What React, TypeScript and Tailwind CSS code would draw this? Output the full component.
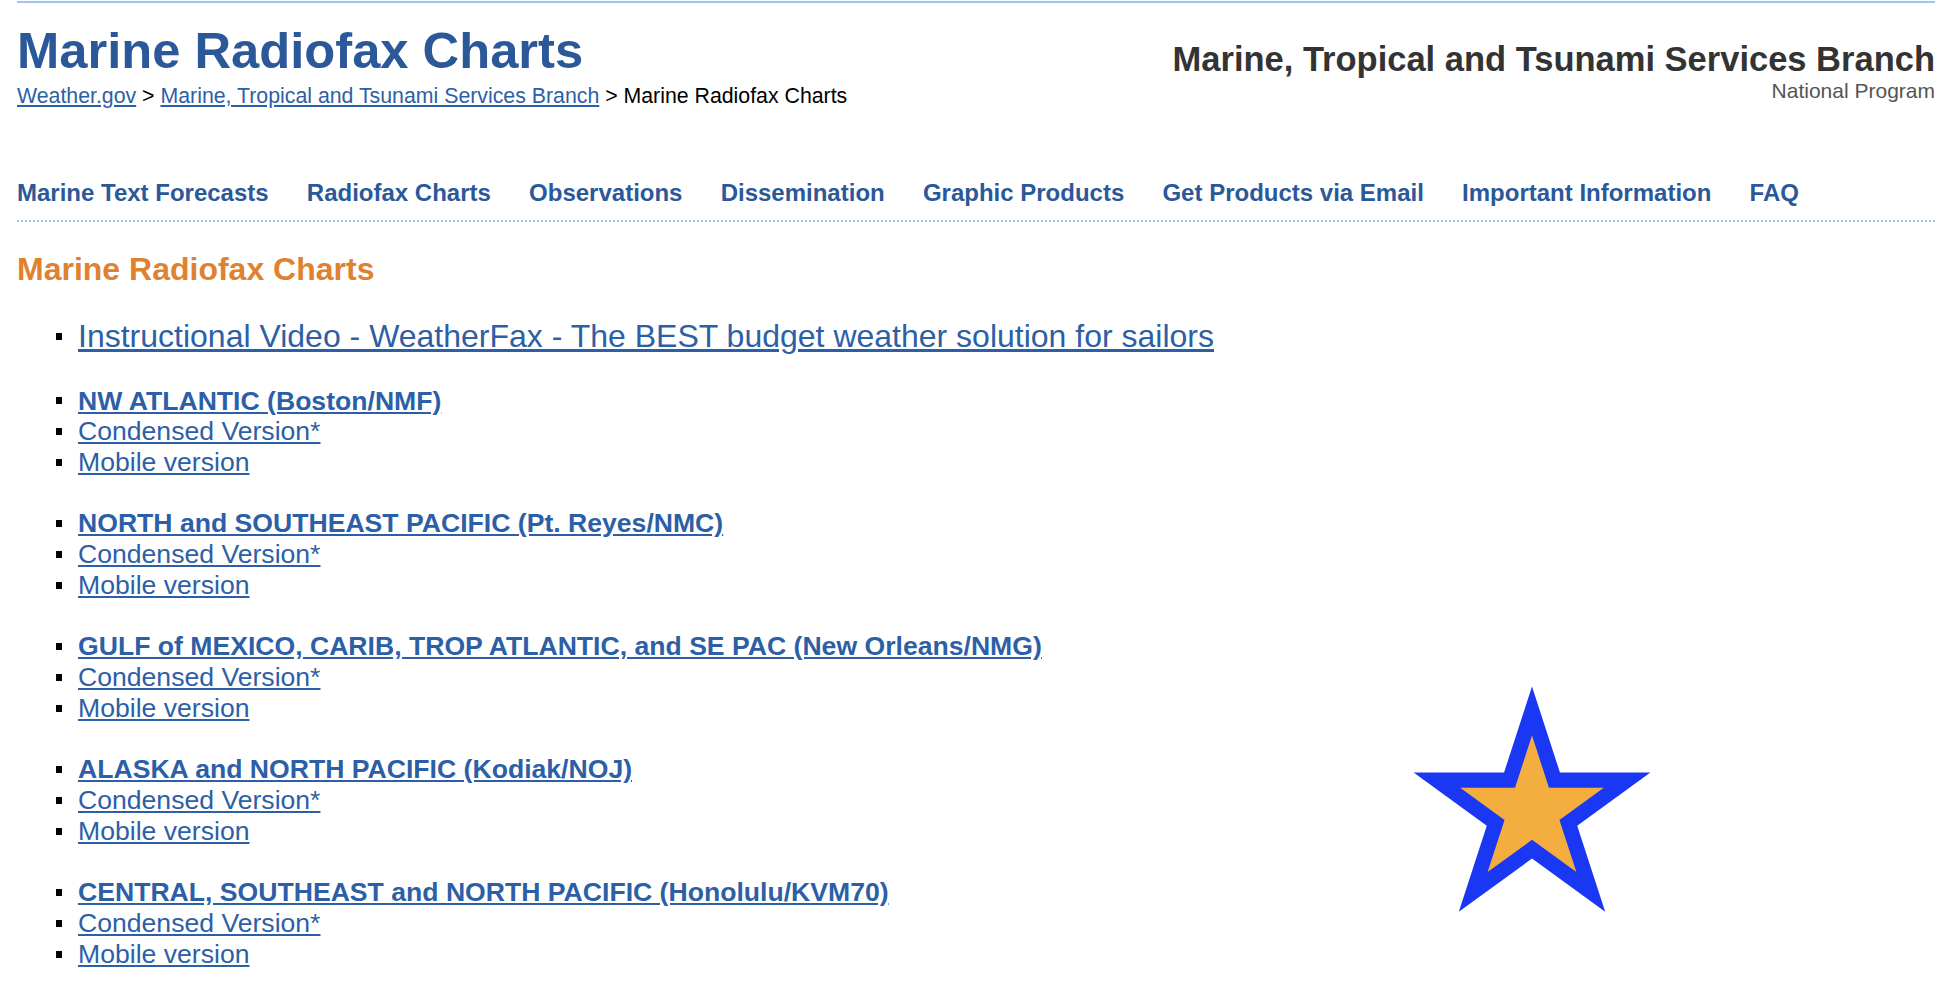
import React from "react";

const groups = [
  "NW ATLANTIC (Boston/NMF)",
  "NORTH and SOUTHEAST PACIFIC (Pt. Reyes/NMC)",
  "GULF of MEXICO, CARIB, TROP ATLANTIC, and SE PAC (New Orleans/NMG)",
  "ALASKA and NORTH PACIFIC (Kodiak/NOJ)",
  "CENTRAL, SOUTHEAST and NORTH PACIFIC (Honolulu/KVM70)",
];

const navItems = [
  "Marine Text Forecasts",
  "Radiofax Charts",
  "Observations",
  "Dissemination",
  "Graphic Products",
  "Get Products via Email",
  "Important Information",
  "FAQ",
];

// five pointed star, outer radius R, centered on cx/cy
function starPoints(cx: number, cy: number, R: number) {
  const r = R * 0.381966;
  const pts: string[] = [];
  for (let i = 0; i < 10; i++) {
    const rad = i % 2 === 0 ? R : r;
    const a = -Math.PI / 2 + (i * Math.PI) / 5;
    pts.push(`${(cx + rad * Math.cos(a)).toFixed(2)},${(cy + rad * Math.sin(a)).toFixed(2)}`);
  }
  return pts.join(" ");
}

function Bullet() {
  return <span className="inline-block w-[6px] h-[7px] bg-black shrink-0 ml-[39px] mr-[16px]" />;
}

function Item({ children, bold }: { children: React.ReactNode; bold?: boolean }) {
  return (
    <li className="flex items-center text-[26.6px] leading-[30.8px]">
      <Bullet />
      <a href="#" className={`text-[#2d5fa6] underline ${bold ? "font-bold" : ""}`}>
        {children}
      </a>
    </li>
  );
}

export default function App() {
  return (
    <div className="min-h-screen bg-white pt-px pl-[17px] pr-2 font-['Liberation_Sans',Arial,sans-serif] text-black">
      <div className="border-t-2 border-[#9ec5ee]">
        {/* Header */}
        <div className="flex justify-between items-start">
          <div>
            <h1 className="mt-[18px] text-[50.7px] leading-[60px] font-bold text-[#2b5898]">
              Marine Radiofax Charts
            </h1>
            <div className="mt-[3px] text-[21.3px] leading-[24px]">
              <a href="#" className="text-[#2d5fa6] underline">Weather.gov</a>
              {" > "}
              <a href="#" className="text-[#2d5fa6] underline">Marine, Tropical and Tsunami Services Branch</a>
              {" > "}
              Marine Radiofax Charts
            </div>
          </div>
          <div className="text-right">
            <div className="mt-[36px] text-[34.5px] leading-[40px] font-bold text-[#333333]">
              Marine, Tropical and Tsunami Services Branch
            </div>
            <div className="text-[21px] leading-[24px] text-[#555555]">National Program</div>
          </div>
        </div>

        {/* Nav */}
        <nav className="mt-[70px] pb-[12px] border-b-2 border-dotted border-[#9ec5ee]">
          <ul className="flex gap-[38.2px] text-[24px] leading-[30px] font-bold text-[#2b5898]">
            {navItems.map((n) => (
              <li key={n}>
                <a href="#">{n}</a>
              </li>
            ))}
          </ul>
        </nav>

        <h2 className="mt-[29px] text-[32px] leading-[36px] font-bold text-[#e0812f]">
          Marine Radiofax Charts
        </h2>

        <div className="flex">
          <div className="w-[1395px] mt-[31px] flex flex-col gap-[30.5px]">
            <ul>
              <li className="flex items-center text-[32px] leading-[37px]">
                <Bullet />
                <a href="#" className="text-[#2d5fa6] underline">
                  Instructional Video - WeatherFax - The BEST budget weather solution for sailors
                </a>
              </li>
            </ul>
            {groups.map((g) => (
              <ul key={g}>
                <Item bold>{g}</Item>
                <Item>Condensed Version*</Item>
                <Item>Mobile version</Item>
              </ul>
            ))}
          </div>
          <div className="mt-[399px]">
            <svg width="240" height="228" viewBox="0 0 240 228">
              <polygon points={starPoints(120, 125, 124.5)} fill="#1a38f4" />
              <polygon points={starPoints(120, 125, 75.5)} fill="#f4ae3f" />
            </svg>
          </div>
        </div>
      </div>
    </div>
  );
}
